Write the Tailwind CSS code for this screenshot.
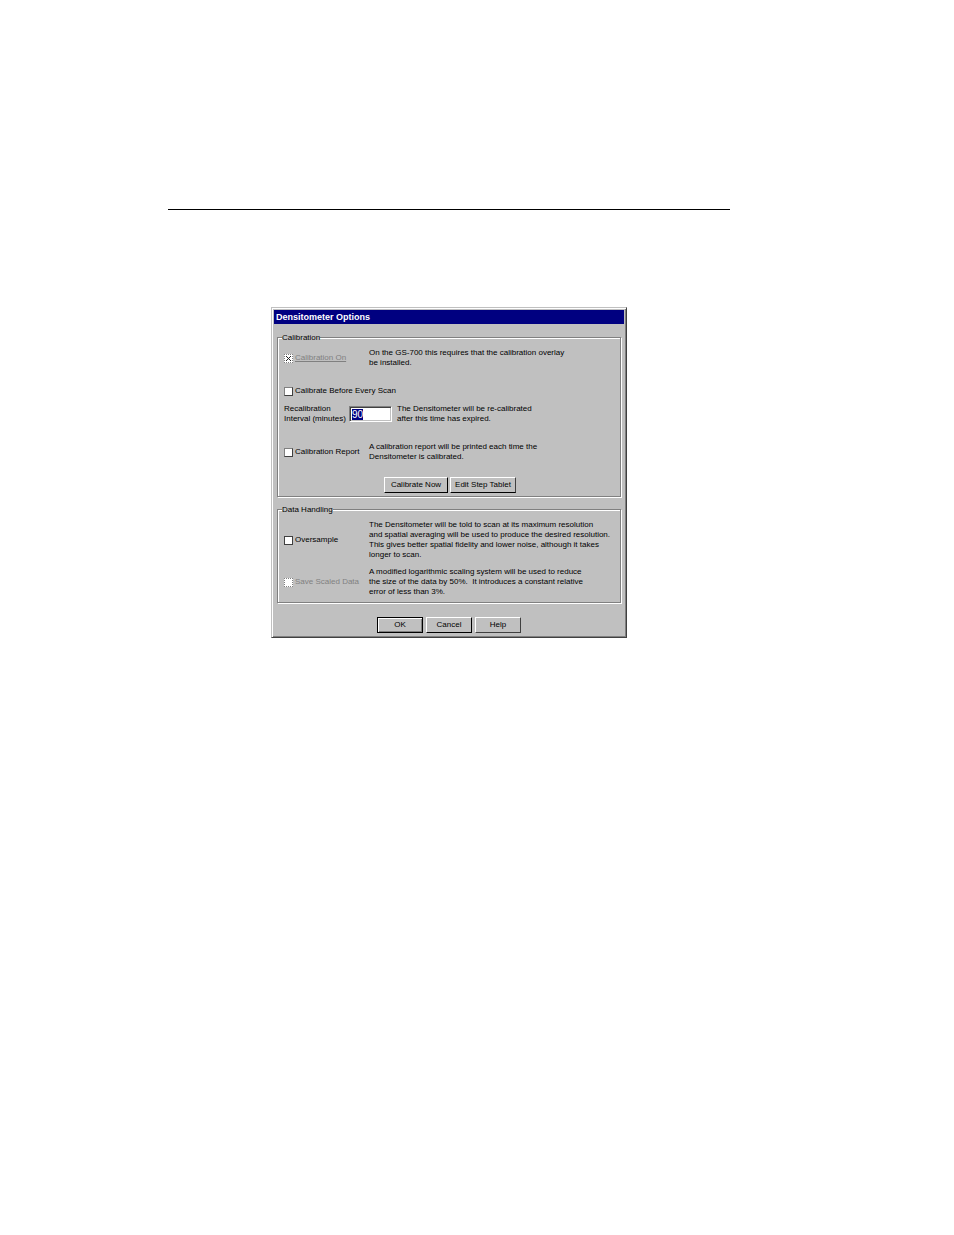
<!DOCTYPE html>
<html lang="en">

<head>
    <meta charset="utf-8" />
    <meta name="viewport" content="width=device-width, initial-scale=1" />
    <title>Densitometer Options</title>
    <script src="https://cdn.jsdelivr.net/npm/@tailwindcss/browser@4"></script>
</head>

<body class="bg-white min-h-screen text-black font-['Liberation_Sans',Arial,sans-serif] text-[8px] leading-[10px]">
    <main class="pt-[209px] pl-[168px] pr-[224px]">
        <hr class="border-black" />

        <form class="mt-[97px] mx-auto w-[356px] bg-[#c0c0c0] border border-t-[#c0c0c0] border-l-[#c0c0c0] border-r-[#404040] border-b-[#404040] shadow-[inset_1px_1px_0_#fff,inset_-1px_-1px_0_#808080] p-[2px]">
            <h1 class="bg-[#000080] text-white font-bold text-[9px] leading-[14px] px-[2px]">Densitometer Options</h1>

            <div class="px-[3px] pt-[9px] pb-[2px]">
                <fieldset class="border border-[#808080] shadow-[inset_1px_1px_0_#fff,1px_1px_0_#fff] pl-[6px] pt-[6px] pb-[3px] whitespace-nowrap">
                    <legend class="bg-[#c0c0c0] leading-[9px] -ml-[2px]">Calibration</legend>

                    <div class="grid grid-cols-[85px_1fr] items-center">
                        <label class="flex items-center gap-[2px] text-[#808080] underline">
                            <span class="relative block size-[9px]">
                                <input type="checkbox" checked disabled class="block appearance-none size-[9px] bg-white border border-dotted border-[#808080]" />
                                <svg class="absolute inset-0 size-[9px]" viewBox="0 0 9 9" stroke="#202020" shape-rendering="crispEdges" aria-hidden="true">
                                    <path d="M2 2.5h1M6 2.5h1M3 3.5h1M5 3.5h1M4 4.5h1M3 5.5h1M5 5.5h1M2 6.5h1M6 6.5h1" />
                                </svg>
                            </span>
                            Calibration On
                        </label>
                        <p>On the GS-700 this requires that the calibration overlay<br />be installed.</p>
                    </div>

                    <label class="flex items-center gap-[2px] mt-[18px]">
                        <input type="checkbox" class="appearance-none size-[9px] bg-white border border-t-[#808080] border-l-[#808080] border-r-[#404040] border-b-[#404040]" />
                        Calibrate Before Every Scan
                    </label>

                    <div class="grid grid-cols-[65px_43px_1fr] items-center mt-2">
                        <label for="interval">Recalibration<br />Interval (minutes)</label>
                        <input id="interval" type="text" value="90" class="w-[43px] h-4 bg-white border border-t-[#808080] border-l-[#808080] border-r-white border-b-white shadow-[inset_1px_1px_0_#404040,inset_-1px_-1px_0_#c0c0c0] pl-[2px] text-[10px] leading-3 outline-none selection:bg-[#000080] selection:text-white" />
                        <p class="pl-[5px]">The Densitometer will be re-calibrated<br />after this time has expired.</p>
                    </div>

                    <div class="grid grid-cols-[85px_1fr] items-center mt-[18px]">
                        <label class="flex items-center gap-[2px]">
                            <input type="checkbox" class="appearance-none size-[9px] bg-white border border-t-[#808080] border-l-[#808080] border-r-[#404040] border-b-[#404040]" />
                            Calibration Report
                        </label>
                        <p>A calibration report will be printed each time the<br />Densitometer is calibrated.</p>
                    </div>

                    <div class="flex gap-[2px] mt-[15px] pl-[100px]">
                        <button type="button" class="w-16 h-4 border border-t-white border-l-white border-r-black border-b-black">Calibrate Now</button>
                        <button type="button" class="w-[66px] h-4 border border-t-white border-l-white border-r-[#404040] border-b-black">Edit Step Tablet</button>
                    </div>
                </fieldset>

                <fieldset class="mt-2 border border-[#808080] shadow-[inset_1px_1px_0_#fff,1px_1px_0_#fff] pl-[6px] pt-[6px] pb-[5px] whitespace-nowrap">
                    <legend class="bg-[#c0c0c0] leading-[9px] -ml-[2px]">Data Handling</legend>
                    <div class="grid grid-cols-[85px_1fr] items-center gap-y-[7px]">
                        <label class="flex items-center gap-[2px]">
                            <input type="checkbox" class="appearance-none size-[9px] bg-white border border-[#404040]" />
                            Oversample
                        </label>
                        <p>The Densitometer will be told to scan at its maximum resolution<br />and spatial averaging will be used to produce the desired resolution.<br />This gives better spatial fidelity and lower noise, although it takes<br />longer to scan.</p>
                        <label class="flex items-center gap-[2px] text-[#808080]">
                            <input type="checkbox" disabled class="appearance-none size-[9px] bg-white border border-dotted border-[#808080]" />
                            Save Scaled Data
                        </label>
                        <p>A modified logarithmic scaling system will be used to reduce<br />the size of the data by 50%.&nbsp; It introduces a constant relative<br />error of less than 3%.</p>
                    </div>
                </fieldset>

                <div class="flex justify-center gap-[3px] mt-[14px]">
                    <button type="submit" class="w-[46px] h-4 border border-black shadow-[inset_1px_1px_0_#fff,inset_-1px_-1px_0_#808080]">OK</button>
                    <button type="button" class="w-[46px] h-4 border border-t-white border-l-white border-r-black border-b-black">Cancel</button>
                    <button type="button" class="w-[46px] h-4 border border-t-white border-l-white border-r-[#404040] border-b-[#404040]">Help</button>
                </div>
            </div>
        </form>
    </main>
    <script>
        // the interval opens focused with its value selected
        const interval = document.getElementById('interval');
        interval.focus();
        interval.select();
    </script>
</body>

</html>
